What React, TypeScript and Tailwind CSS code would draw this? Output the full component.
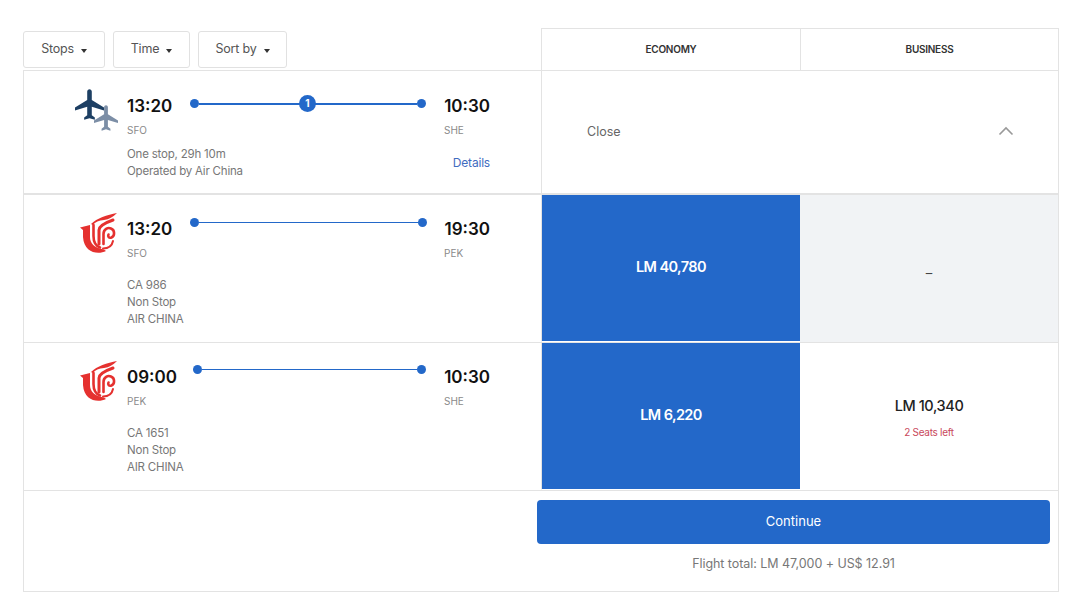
import React from "react";

const font = "font-['Inter',sans-serif]";

const PlaneIcon = ({ className }: { className: string }) => (
  <svg viewBox="2 2 19 20" className={className} fill="currentColor">
    <path d="M21 16v-2l-8-5V3.5c0-.83-.67-1.5-1.5-1.5S10 2.67 10 3.5V9l-8 5v2l8-2.5V19l-2 1.5V22l3.5-1 3.5 1v-1.5L13 19v-5.5l8 2.5z" />
  </svg>
);

// Air China phoenix mark
const AirChinaLogo = () => (
  <svg viewBox="0 0 37 41" className="h-[41px] w-[37px]" fill="none" stroke="#e5312f" strokeLinecap="round">
    <path d="M0 14.5 L10 12 L10 24 C10 30 14 35 24 36.5 L26 38 C18 42 4 40 3 24 L3 17 Z" fill="#e5312f" stroke="none" />
    <path d="M11 11 C17 5 27 2 37 0 C33 4 29 6.5 24 7 C19 7.5 15 9 13 12 Z" fill="#e5312f" stroke="none" />
    <path d="M13.5 12 V23 C13.5 29 16 33 20 34.5" strokeWidth="2.6" />
    <path d="M19 31 V17 C19 12.5 26 9.5 33 7" strokeWidth="3" />
    <path d="M23.5 31 V21 C23.5 16 28 14 31 15.5 C35 17 35 23 31.5 24.5 C29 25.5 27.5 23.5 28.5 21.5" strokeWidth="2.6" />
    <path d="M23 35.5 C28 35.5 32 33 33 28" strokeWidth="2" />
  </svg>
);

const Caret = () => <span className="ml-[7px] mt-[2px] h-0 w-0 border-x-[3.5px] border-t-[4px] border-x-transparent border-t-[#333]" />;

const FilterButton = ({ label, width }: { label: string; width: string }) => (
  <button className={`flex h-[37px] items-center justify-center rounded-[3px] border border-[#e1e1e1] text-[12.5px] tracking-[-0.2px] text-[#555] ${width}`}>
    {label}
    <Caret />
  </button>
);

interface LegProps {
  logo: React.ReactNode;
  from: string;
  to: string;
  fromCode: string;
  toCode: string;
  lineClass: string;
  stop?: boolean;
  lines: string[];
  details?: boolean;
  height: string;
  top: string;
  gap: string;
}

const Leg = ({ logo, from, to, fromCode, toCode, lineClass, stop, lines, details, height, top, gap }: LegProps) => (
  <div className={`flex w-[517px] ${height}`}>
    <div className="relative w-[103px] shrink-0">{logo}</div>
    <div className={`w-[363px] ${top}`}>
      <div className="flex h-[22px] items-center justify-between">
        <span className="text-[17px] font-semibold text-[#111]">{from}</span>
        <span className="text-[17px] font-semibold text-[#111]">{to}</span>
      </div>
      <div className="relative">
        <div className={`absolute flex items-center ${lineClass}`}>
          <span className="h-[9px] w-[9px] shrink-0 rounded-full bg-[#2368c9]" />
          <span className={`flex-1 bg-[#2368c9] ${stop ? "h-[2px]" : "h-[1.5px]"}`} />
          <span className="h-[9px] w-[9px] shrink-0 rounded-full bg-[#2368c9]" />
          {stop && (
            <span className="absolute left-[109px] flex h-[17px] w-[17px] items-center justify-center rounded-full bg-[#2368c9] text-[10px] font-bold text-white">
              1
            </span>
          )}
        </div>
      </div>
      <div className="mt-[6px] flex justify-between text-[10px] leading-[13px] text-[#8a8a8a]">
        <span>{fromCode}</span>
        <span className="w-[46px]">{toCode}</span>
      </div>
      <div className={`flex items-center justify-between ${gap}`}>
        <div className="text-[11.5px] leading-[17px] tracking-[-0.2px] text-[#777]">
          {lines.map((line) => (
            <div key={line}>{line}</div>
          ))}
        </div>
        {details && <span className="text-[12px] tracking-[-0.2px] text-[#3f6cc0]">Details</span>}
      </div>
    </div>
  </div>
);

const EconomyCell = ({ price }: { price: string }) => (
  <div className="flex w-[259px] items-center justify-center border-b border-l border-b-white border-l-[#e3e3e3] bg-[#2368c9] pb-[2px] text-[14.5px] font-semibold tracking-[-0.6px] text-white">
    {price}
  </div>
);

export default function App() {
  return (
    <div className={`h-[602px] w-[1080px] overflow-hidden bg-white pt-[28px] pl-[23px] ${font}`}>
      <div className="w-[1036px]">
        {/* Header */}
        <div className="flex h-[43px]">
          <div className="flex w-[518px] gap-2 border-b border-[#e3e3e3] pt-[3px]">
            <FilterButton label="Stops" width="w-[82px]" />
            <FilterButton label="Time" width="w-[77px]" />
            <FilterButton label="Sort by" width="w-[89px]" />
          </div>
          <div className="flex flex-1 border border-[#e3e3e3] text-[10px] font-semibold tracking-[-0.25px] text-[#333]">
            <div className="flex w-[259px] items-center justify-center border-r border-[#e3e3e3]">ECONOMY</div>
            <div className="flex flex-1 items-center justify-center">BUSINESS</div>
          </div>
        </div>

        <div className="border-x border-b border-[#e3e3e3]">
          {/* Summary row */}
          <div className="flex h-[124px] border-b-2 border-[#e3e3e3]">
            <Leg
              height="h-[122px]"
              top="pt-[25px]"
              gap="mt-[9px]"
              logo={
                <>
                  <PlaneIcon className="absolute left-[51px] top-[18px] h-[31px] w-[29px] text-[#1d3f63]" />
                  <PlaneIcon className="absolute left-[70px] top-[34px] h-[26px] w-[24px] text-[#7c8ea6]" />
                </>
              }
              from="13:20"
              to="10:30"
              fromCode="SFO"
              toCode="SHE"
              lineClass="left-[63px] top-[-19px] w-[236px]"
              stop
              lines={["One stop, 29h 10m", "Operated by Air China"]}
              details
            />
            <div className="flex flex-1 items-center justify-between border-l border-[#e3e3e3] pl-[45px] pr-[44px] pb-[1px]">
              <span className="mt-[2px] text-[12.5px] text-[#666]">Close</span>
              <svg viewBox="0 0 16 10" className="mb-[2px] h-[10px] w-[16px]" fill="none" stroke="#999" strokeWidth="1.6">
                <path d="M1.5 8.5 L8 2 L14.5 8.5" />
              </svg>
            </div>
          </div>

          {/* Outbound leg */}
          <div className="flex h-[148px] border-b border-[#e3e3e3]">
            <Leg
              height="h-[147px]"
              top="pt-[24px]"
              gap="mt-[17px]"
              logo={
                <div className="absolute left-[56px] top-[18px]">
                  <AirChinaLogo />
                </div>
              }
              from="13:20"
              to="19:30"
              fromCode="SFO"
              toCode="PEK"
              lineClass="left-[63px] top-[-23px] w-[237px]"
              lines={["CA 986", "Non Stop", "AIR CHINA"]}
            />
            <EconomyCell price="LM 40,780" />
            <div className="flex flex-1 items-center justify-center bg-[#f1f3f5] pt-[10px] text-[13px] text-[#444]">–</div>
          </div>

          {/* Connecting leg */}
          <div className="flex h-[148px] border-b border-[#e3e3e3]">
            <Leg
              height="h-[147px]"
              top="pt-[24px]"
              gap="mt-[17px]"
              logo={
                <div className="absolute left-[56px] top-[18px]">
                  <AirChinaLogo />
                </div>
              }
              from="09:00"
              to="10:30"
              fromCode="PEK"
              toCode="SHE"
              lineClass="left-[66px] top-[-24px] w-[233px]"
              lines={["CA 1651", "Non Stop", "AIR CHINA"]}
            />
            <EconomyCell price="LM 6,220" />
            <div className="flex flex-1 flex-col items-center justify-center pt-[2px]">
              <span className="text-[14.5px] font-medium tracking-[-0.4px] text-[#222]">LM 10,340</span>
              <span className="mt-[8px] text-[10px] tracking-[-0.3px] text-[#c9485b]">2 Seats left</span>
            </div>
          </div>

          {/* Footer */}
          <div className="flex h-[100px] flex-col items-end pr-[8px] pt-[9px]">
            <div className="w-[513px]">
              <button className="flex h-[44px] w-full items-center justify-center rounded-[4px] bg-[#2368c9] text-[13px] text-white">
                Continue
              </button>
              <div className="mt-[11px] text-center text-[12.5px] tracking-[-0.05px] text-[#777]">
                Flight total: LM 47,000 + US$ 12.91
              </div>
            </div>
          </div>
        </div>
      </div>
    </div>
  );
}
